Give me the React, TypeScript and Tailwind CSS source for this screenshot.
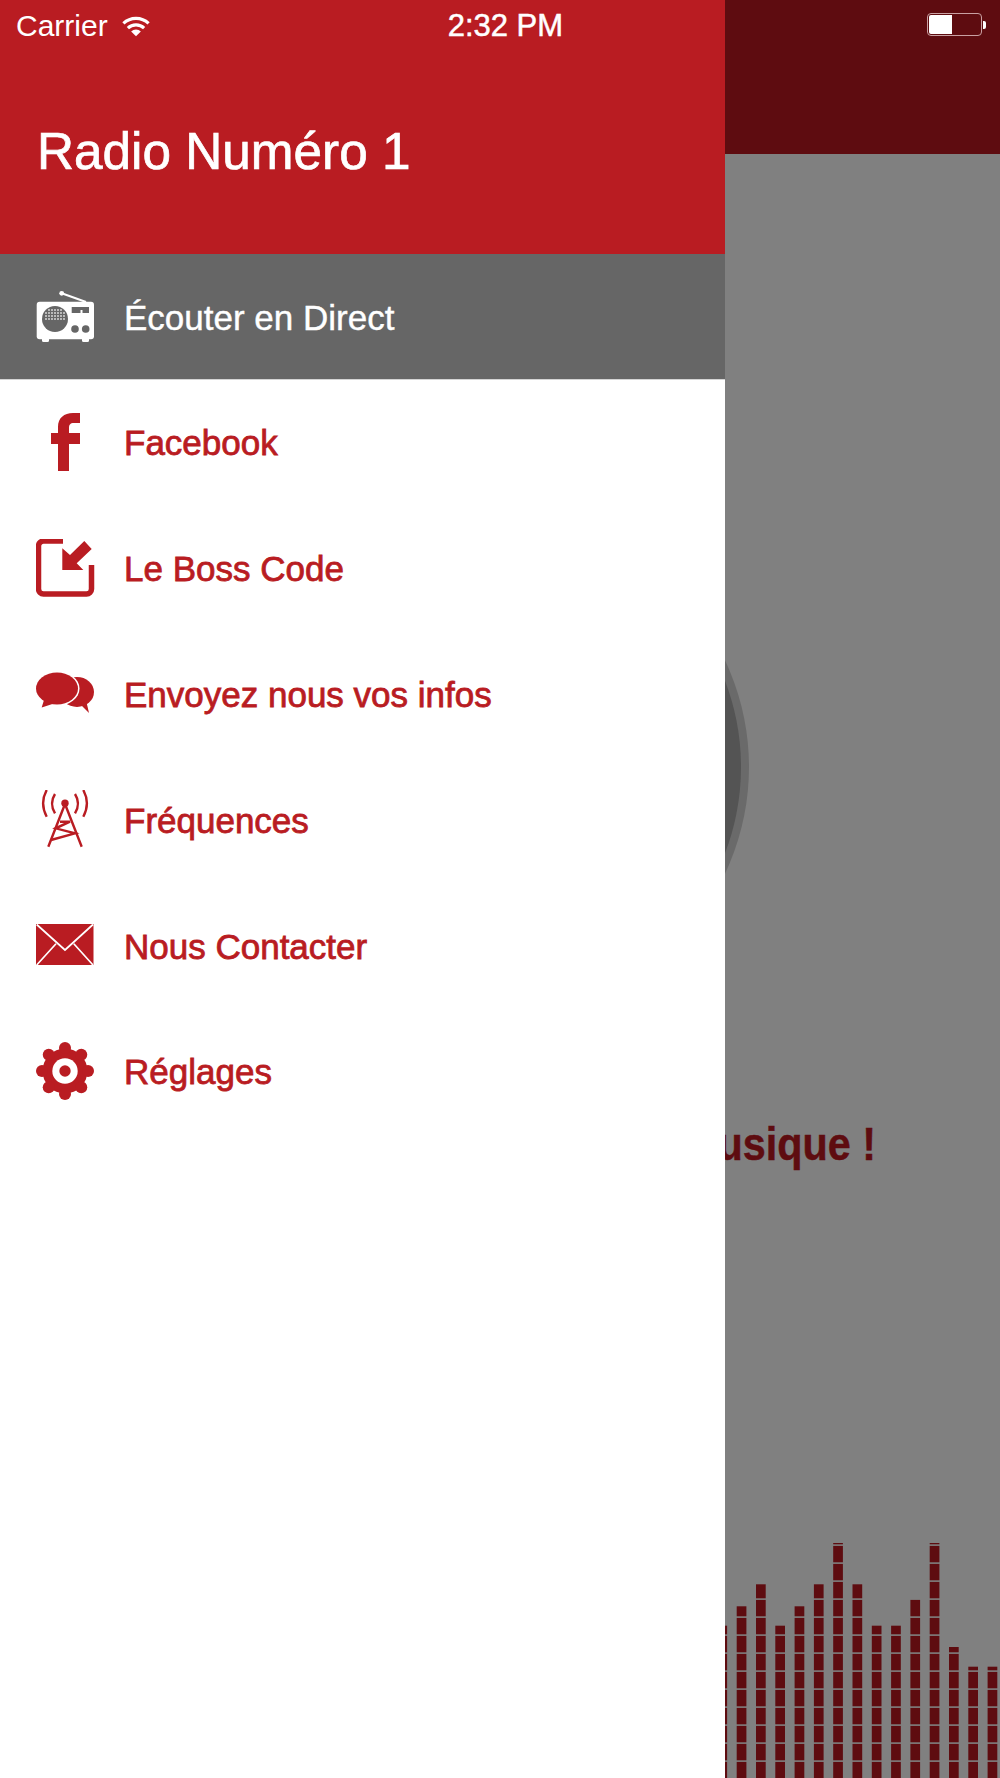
const bars = [1625.7, 1606.3, 1584.3, 1625.7, 1606.3, 1584.3, 1543, 1584.3, 1625.7, 1625.7, 1599.7, 1543, 1647, 1666.7, 1666.7];

function RadioIcon() {
  const dots: number[] = [7, 10, 13, 16, 19, 22, 25, 28, 31];
  return (
    <svg viewBox="0 0 60 60" className="w-[60px] h-[60px]">
      <path d="M25.7 6.3 L50 15" stroke="#fff" strokeWidth="2" fill="none" />
      <circle cx="25.7" cy="6.3" r="2.4" fill="#fff" />
      <rect x="0.7" y="14.7" width="57.3" height="37.5" rx="3" fill="#fff" />
      <rect x="6" y="50" width="7" height="5" rx="1.5" fill="#fff" />
      <rect x="46" y="50" width="7" height="5" rx="1.5" fill="#fff" />
      <circle cx="19" cy="32" r="13" fill="#666" />
      {dots.map((x) =>
        dots.map((y) => {
          const cy = y + 1;
          return (x - 19) * (x - 19) + (cy - 32) * (cy - 32) < 132 ? (
            <rect key={`${x}-${y}`} x={x - 0.8} y={cy - 0.8} width="1.6" height="1.6" fill="#e8e8e8" />
          ) : null;
        })
      )}
      <path d="M35.7 20 H53 V26 H46.5 V23 H44.5 V26 H35.7 Z" fill="#666" />
      <circle cx="39" cy="42" r="3.8" fill="#666" />
      <circle cx="49.7" cy="42" r="3.8" fill="#666" />
    </svg>
  );
}

function FacebookIcon() {
  return (
    <svg viewBox="0 0 60 60" className="w-[60px] h-[60px]">
      <path d="M22 58 V31 H15 V20 H22 V14 C22 5 28 0 37 0 H44 V10 H38 C34 10 33 12 33 15 V20 H44 V31 H33 V58 Z" fill="#b91c22" />
    </svg>
  );
}

function BossIcon() {
  return (
    <svg viewBox="0 0 60 60" className="w-[60px] h-[60px]">
      <path d="M27 2 H7.5 A5 5 0 0 0 2.5 7 V50 A5 5 0 0 0 7.5 55 H50.5 A5 5 0 0 0 55.5 50 V26" fill="none" stroke="#b91c22" strokeWidth="5.5" />
      <path d="M26.3 31 V9.3 L34 16 L48.3 2 L55.7 10 L40.7 24.3 L47.3 31 Z" fill="#b91c22" />
    </svg>
  );
}

function ChatIcon() {
  return (
    <svg viewBox="0 0 60 60" className="w-[60px] h-[60px]">
      <ellipse cx="41" cy="28" rx="17" ry="15" fill="#b91c22" />
      <path d="M44 40 L53 49 L50 36 Z" fill="#b91c22" />
      <ellipse cx="21" cy="24.5" rx="22.5" ry="17.5" fill="#fff" />
      <ellipse cx="21" cy="24.5" rx="21" ry="16" fill="#b91c22" />
      <path d="M8 36 L5.7 43.5 L18 39.5 Z" fill="#b91c22" />
    </svg>
  );
}

function TowerIcon() {
  return (
    <svg viewBox="0 0 60 60" className="w-[60px] h-[60px]" fill="none" stroke="#b91c22" strokeWidth="2.4">
      <circle cx="29" cy="13.3" r="3.7" fill="#b91c22" stroke="none" />
      <path d="M29 14 L12.3 56.7 M29 14 L45.7 56.7" />
      <path d="M24 31.7 H34 L19.7 38.3 L39 43.3 L15 50" />
      <path d="M10.7 0 Q3.5 13.3 10.7 26.7" />
      <path d="M19 4 Q13 13.5 19 23.3" />
      <path d="M47.3 0 Q54.5 13.3 47.3 26.7" />
      <path d="M39 4 Q45 13.5 39 23.3" />
    </svg>
  );
}

function MailIcon() {
  return (
    <svg viewBox="0 0 60 60" className="w-[60px] h-[60px]">
      <rect x="0" y="8" width="57.5" height="41" fill="#b91c22" />
      <path d="M0.7 8.5 L29 34 L57 8.5 M0.7 49 L20 27.7 M57 49 L37.8 27.7" fill="none" stroke="#fff" strokeWidth="1.7" />
    </svg>
  );
}

function GearIcon() {
  const angles = [0, 45, 90, 135, 180, 225, 270, 315];
  return (
    <svg viewBox="0 0 60 60" className="w-[60px] h-[60px]">
      <circle cx="29" cy="29" r="22.5" fill="#b91c22" />
      {angles.map((a) => (
        <circle
          key={a}
          cx={29 + 23 * Math.cos((a * Math.PI) / 180)}
          cy={29 + 23 * Math.sin((a * Math.PI) / 180)}
          r="6"
          fill="#b91c22"
        />
      ))}
      <circle cx="29" cy="29" r="12.7" fill="#fff" />
      <circle cx="29" cy="29" r="5.7" fill="#b91c22" />
    </svg>
  );
}

function WifiIcon() {
  return (
    <svg viewBox="0 0 30 22" className="w-[28px] h-[22px] ml-[14px]" fill="none" stroke="#fff" strokeWidth="3.4">
      <path d="M1.5 8.3 A19.5 19.5 0 0 1 28.5 8.3" />
      <path d="M6.3 13.3 A12.5 12.5 0 0 1 23.7 13.3" />
      <path d="M15 22 L9.8 16.8 A7.4 7.4 0 0 1 20.2 16.8 Z" fill="#fff" stroke="none" />
    </svg>
  );
}

function Equalizer() {
  const rects: { x: number; y: number; h: number }[] = [];
  bars.forEach((top, i) => {
    const x = 717.4 + 19.3 * i - 725;
    for (let k = -1; k < 14; k++) {
      const gap = 1760.3 - 18 * k;
      const segTop = gap + 1.6;
      const segBottom = gap + 18;
      const y = Math.max(segTop, top);
      if (segBottom > y) rects.push({ x, y: y - 1520, h: segBottom - y });
    }
  });
  return (
    <svg viewBox="0 0 275 258" className="w-[275px] h-[258px] mt-auto shrink-0">
      {rects.map((r, i) => (
        <rect key={i} x={r.x} y={r.y} width="9.7" height={r.h} fill="#5e0c10" />
      ))}
    </svg>
  );
}

const items = [
  { label: "Facebook", icon: <FacebookIcon /> },
  { label: "Le Boss Code", icon: <BossIcon /> },
  { label: "Envoyez nous vos infos", icon: <ChatIcon /> },
  { label: "Fréquences", icon: <TowerIcon /> },
  { label: "Nous Contacter", icon: <MailIcon /> },
  { label: "Réglages", icon: <GearIcon /> },
];

export default function App() {
  return (
    <div className="flex w-[1000px] h-[1778px] overflow-hidden bg-white font-['Liberation_Sans',Arial,sans-serif]">
      <div className="w-[725px] shrink-0 flex flex-col bg-white">
        <div className="h-[254px] bg-[#b91c22] text-white flex flex-col">
          <div className="h-[51px] flex items-center pl-4 text-[30px] leading-none">
            <span>Carrier</span>
            <WifiIcon />
            <span className="ml-[298px] text-[31px] [-webkit-text-stroke:0.5px_#fff]">2:32 PM</span>
          </div>
          <h1 className="mt-[69px] pl-[37px] text-[51.3px] leading-[64px] font-normal [-webkit-text-stroke:0.7px_#fff]">Radio Numéro 1</h1>
        </div>
        <div className="h-[126px] bg-[#666666] border-b border-[#d4d4d4] flex items-center pl-9 text-white">
          <RadioIcon />
          <span className="ml-7 mt-[1px] text-[35px] leading-none [-webkit-text-stroke:0.4px_#fff]">Écouter en Direct</span>
        </div>
        {items.map((item) => (
          <div key={item.label} className="h-[125.8px] flex items-center pl-9 text-[#b91c22]">
            {item.icon}
            <span className="ml-7 text-[35px] leading-none [-webkit-text-stroke:0.8px_#b91c22]">{item.label}</span>
          </div>
        ))}
      </div>
      <div className="w-[275px] shrink-0 flex flex-col bg-[#808080] overflow-hidden">
        <div className="h-[154px] shrink-0 bg-[#5e0c10] flex justify-end items-start pt-[13px] pr-[14px]">
          <div className="flex items-center">
            <div className="w-[55px] h-[23px] rounded-[4px] border border-[#c9a0a2] p-px">
              <div className="w-[23px] h-full bg-white rounded-l-[2px]" />
            </div>
            <div className="w-[3px] h-[8px] bg-white rounded-r-[2px] ml-px" />
          </div>
        </div>
        <svg viewBox="0 0 30 220" className="w-[30px] h-[220px] mt-[503px] shrink-0">
          <circle cx="-225" cy="110" r="249" fill="#6a6a6a" />
          <circle cx="-225" cy="110" r="241" fill="#545454" />
        </svg>
        <div className="mt-[240px] flex justify-end pr-[124px] whitespace-nowrap">
          <span className="origin-right scale-x-[0.88] text-[47px] leading-[54px] font-bold text-[#5e0c10] [-webkit-text-stroke:0.5px_#5e0c10]">musique !</span>
        </div>
        <Equalizer />
      </div>
    </div>
  );
}
